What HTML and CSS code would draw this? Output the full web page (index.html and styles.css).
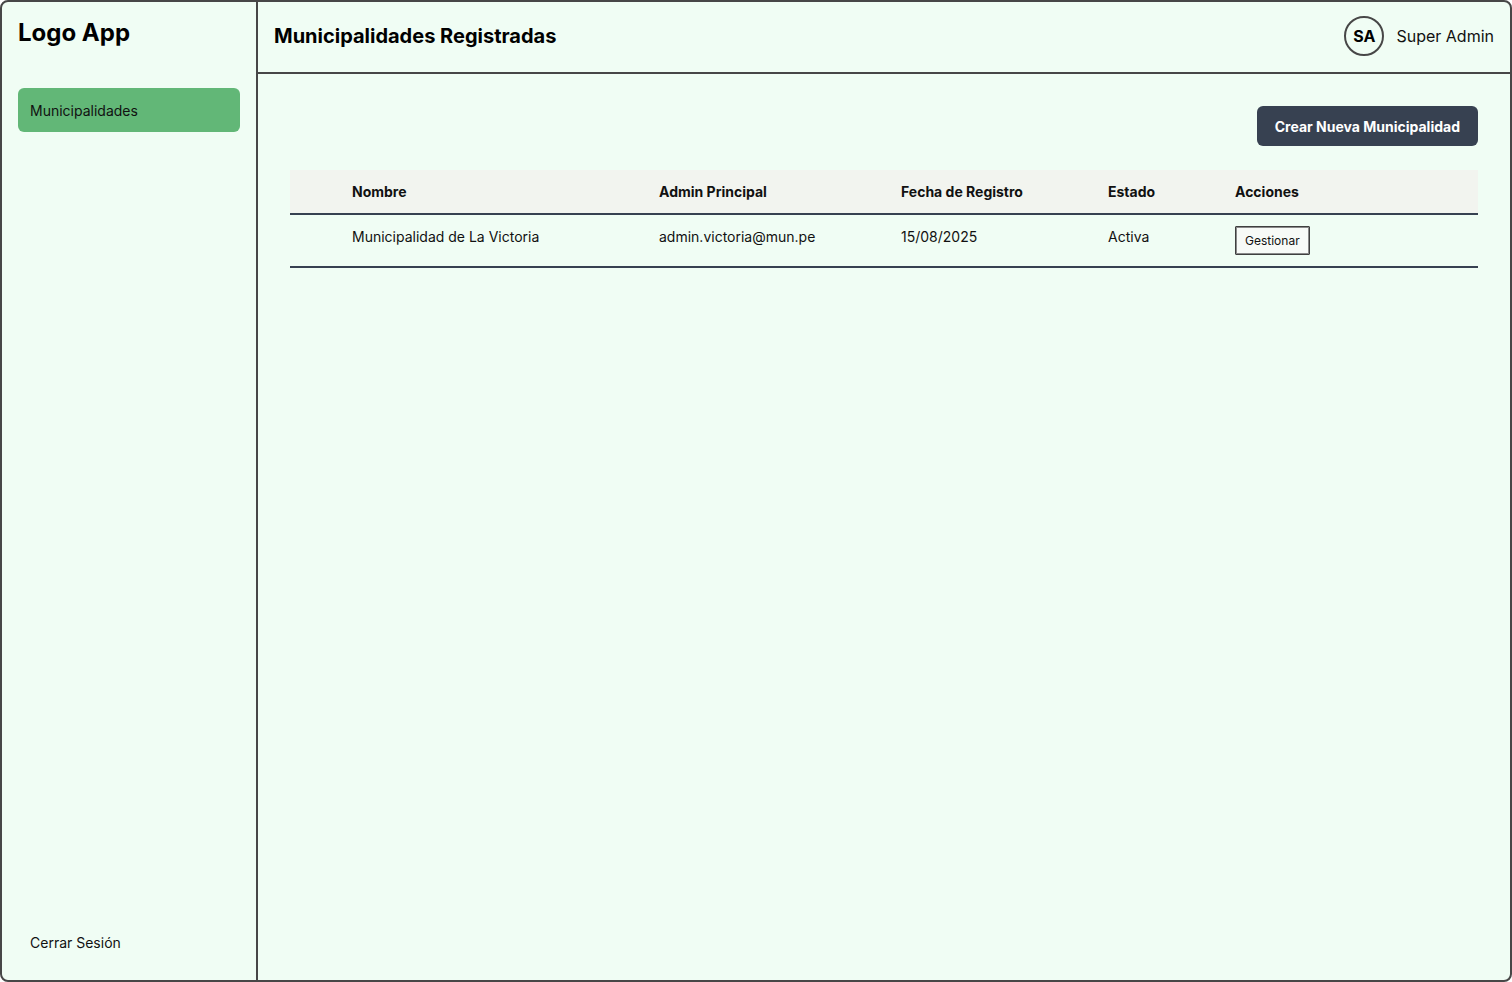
FILE: index.html
```html
<!DOCTYPE html>
<html lang="es">
<head>
<meta charset="utf-8">
<title>Municipalidades Registradas</title>
<link rel="stylesheet" href="styles.css">
</head>
<body>
<div class="frame">
  <aside class="sidebar">
    <div class="logo">Logo App</div>
    <nav class="nav">
      <a class="nav-item active">Municipalidades</a>
    </nav>
    <a class="nav-item logout">Cerrar Sesión</a>
  </aside>
  <div class="content">
    <header class="topbar">
      <h1 class="title">Municipalidades Registradas</h1>
      <div class="user">
        <span class="avatar">SA</span>
        <span class="user-name">Super Admin</span>
      </div>
    </header>
    <main class="main">
      <div class="actions">
        <button class="btn-primary">Crear Nueva Municipalidad</button>
      </div>
      <table class="table">
        <colgroup>
          <col class="c0"><col class="c1"><col class="c2"><col class="c3"><col class="c4"><col class="c5">
        </colgroup>
        <thead>
          <tr>
            <th></th>
            <th>Nombre</th>
            <th>Admin Principal</th>
            <th>Fecha de Registro</th>
            <th>Estado</th>
            <th>Acciones</th>
          </tr>
        </thead>
        <tbody>
          <tr>
            <td></td>
            <td>Municipalidad de La Victoria</td>
            <td>admin.victoria@mun.pe</td>
            <td>15/08/2025</td>
            <td>Activa</td>
            <td><button class="btn-outline">Gestionar</button></td>
          </tr>
        </tbody>
      </table>
    </main>
  </div>
</div>
</body>
</html>
```
FILE: styles.css
```css
* { box-sizing: border-box; }
html, body { margin: 0; padding: 0; }
body {
  font-family: Inter, "Noto Sans", "Liberation Sans", sans-serif;
  color: #111;
  background: #ffffff;
}
.frame {
  width: 1512px;
  height: 982px;
  border: 2px solid #474747;
  border-radius: 8px;
  background: #f0fdf4;
  display: flex;
  overflow: hidden;
}
.sidebar {
  width: 256px;
  flex: 0 0 256px;
  border-right: 2px solid #474747;
  padding: 16px;
  display: flex;
  flex-direction: column;
}
.logo {
  font-size: 24px;
  font-weight: 700;
  line-height: 30px;
  margin-bottom: 40px;
  color: #000;
}
.nav { flex: 1; }
.nav-item {
  display: flex;
  align-items: center;
  height: 44px;
  padding: 0 12px;
  border-radius: 6px;
  font-size: 14px;
  color: #111;
}
.nav-item.active { background: #62b777; }
.content {
  flex: 1;
  display: flex;
  flex-direction: column;
}
.topbar {
  height: 72px;
  border-bottom: 2px solid #474747;
  display: flex;
  align-items: center;
  justify-content: space-between;
  padding: 0 16px 2px;
}
.title {
  margin: 0;
  font-size: 20px;
  font-weight: 700;
  color: #000;
}
.user {
  display: flex;
  align-items: center;
  gap: 12px;
}
.avatar {
  width: 40px;
  height: 40px;
  border: 2px solid #474747;
  border-radius: 50%;
  display: flex;
  align-items: center;
  justify-content: center;
  font-size: 16px;
  font-weight: 700;
  color: #000;
}
.user-name {
  font-size: 16px;
  color: #111;
}
.main {
  padding: 32px;
}
.actions {
  display: flex;
  justify-content: flex-end;
  margin-bottom: 24px;
}
.btn-primary {
  font-family: inherit;
  height: 40px;
  padding: 0 18px;
  border: none;
  border-radius: 6px;
  background: #374151;
  color: #fff;
  font-size: 14px;
  font-weight: 700;
}
.table {
  width: 100%;
  border-collapse: collapse;
  table-layout: fixed;
}
.c0 { width: 50px; }
.c1 { width: 307px; }
.c2 { width: 242px; }
.c3 { width: 207px; }
.c4 { width: 127px; }
.table th {
  background: #f2f4ef;
  text-align: left;
  font-size: 14px;
  font-weight: 700;
  line-height: 19px;
  padding: 12px;
  color: #111;
  border-bottom: 2px solid #374151;
}
.table td {
  font-size: 14px;
  line-height: 20px;
  padding: 12px 12px 11px;
  vertical-align: top;
  color: #111;
  border-bottom: 2px solid #374151;
}
.btn-outline {
  font-family: inherit;
  display: inline-block;
  vertical-align: top;
  margin-top: -1px;
  height: 29px;
  padding: 0 9px;
  background: #f7faf7;
  border: 1px solid #3f3f3f;
  box-shadow: inset 0 0 0 1px #8a8a8a;
  border-radius: 1px;
  font-size: 12px;
  color: #111;
}
```
